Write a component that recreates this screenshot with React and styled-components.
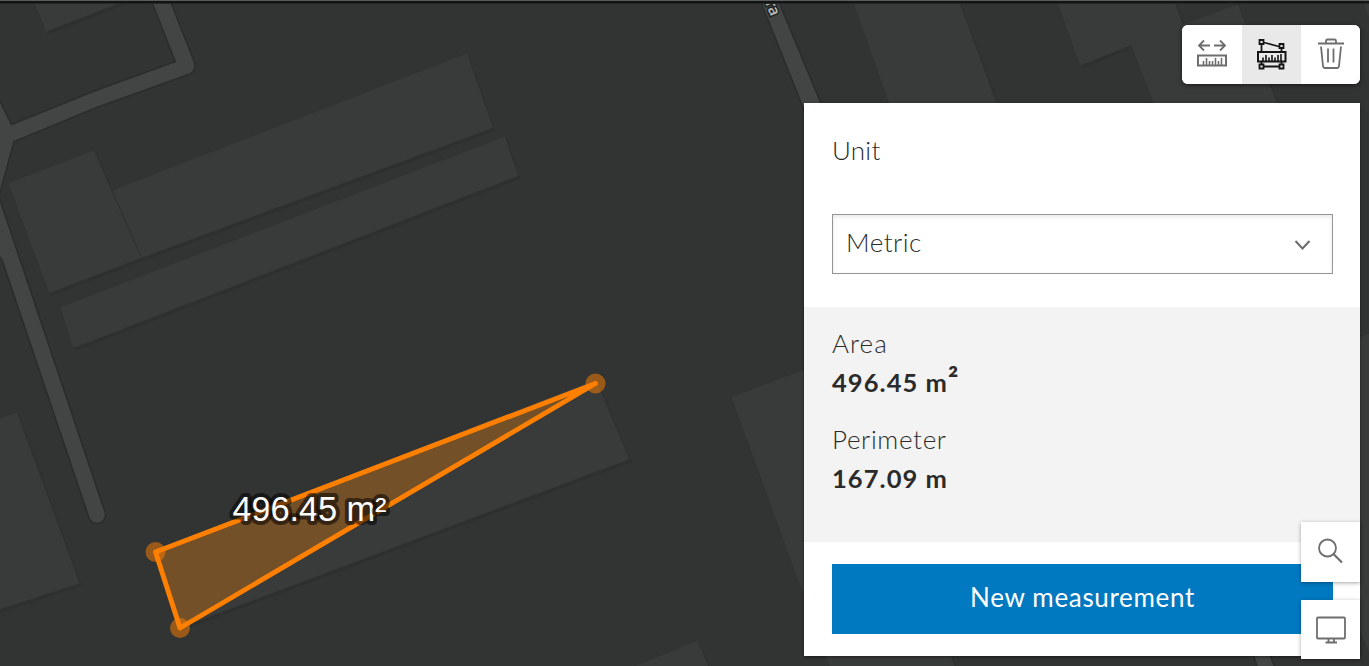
import React from "react";
import styled, { createGlobalStyle } from "styled-components";

const GlobalStyle = createGlobalStyle`
  *, *::before, *::after { box-sizing: border-box; }
  body { margin: 0; overflow: hidden; font-family: Lato, "Liberation Sans", sans-serif; color: #2b2b2b; }
  button { font: inherit; border: 0; padding: 0; cursor: pointer; }
`;

const Viewer = styled.main`
  position: relative;
  width: 1369px;
  height: 666px;
  overflow: hidden;
  background: #323433;
`;

const MapCanvas = styled.svg`
  position: absolute;
  inset: 0;
  display: block;
`;

const Tools = styled.div`
  position: absolute;
  top: 25px;
  right: 9px;
  width: 556px;
  display: flex;
  flex-direction: column;
  align-items: flex-end;
  gap: 19px;
`;

const Toolbar = styled.div`
  display: flex;
  width: 178px;
  height: 59px;
  border-radius: 6px;
  overflow: hidden;
  background: #fff;
  box-shadow: 0 1px 4px rgba(0, 0, 0, 0.6);
`;

const ToolButton = styled.button`
  flex: ${(p) => (p.$wide ? "0 0 60px" : "0 0 59px")};
  display: flex;
  align-items: center;
  justify-content: center;
  padding-bottom: 1px;
  background: ${(p) => (p.$active ? "#e9e9e9" : "#fff")};
  color: ${(p) => (p.$active ? "#151515" : "#6e6e6e")};
`;

const Panel = styled.section`
  width: 556px;
  height: 553px;
  background: #fff;
  box-shadow: 0 1px 3px rgba(0, 0, 0, 0.5);
`;

const UnitSection = styled.div`
  height: 204px;
  padding: 31px 27px 0 28px;
`;

const Label = styled.div`
  font-weight: 300;
  font-size: 26px;
  line-height: 32px;
  letter-spacing: ${(p) => p.$spacing || "0.5px"};
`;

const Select = styled.div`
  display: flex;
  align-items: center;
  justify-content: space-between;
  height: 60px;
  margin-top: 48px;
  padding: 0 21px 5px 13px;
  border: 1px solid #959595;
  box-shadow: inset 0 2px 4px rgba(0, 0, 0, 0.09);
  svg { margin-top: 7px; }
`;

const Results = styled.div`
  height: 235px;
  padding: 20px 28px 0;
  background: #f3f3f3;
`;

const Result = styled.div`
  height: 96px;
`;

const Value = styled.div`
  margin-top: 8px;
  font-weight: 700;
  font-size: 25.5px;
  line-height: 31px;
  letter-spacing: 1.05px;
`;

const Exponent = styled.span`
  font-size: 31px;
  line-height: 0;
`;

const Actions = styled.div`
  padding: 22px 27px 22px 28px;
`;

const PrimaryButton = styled.button`
  display: block;
  width: 100%;
  height: 70px;
  padding-bottom: 4px;
  background: #0079c1;
  color: #fff;
  font-size: 26px;
  letter-spacing: 0.67px;
`;

const CornerControls = styled.div`
  position: absolute;
  right: 9px;
  bottom: 7px;
  display: flex;
  flex-direction: column;
  gap: 18px;
`;

const CornerButton = styled.button`
  display: flex;
  align-items: center;
  justify-content: center;
  width: 59px;
  height: ${(p) => p.$height}px;
  background: #fff;
  color: #6e6e6e;
  box-shadow: 0 1px 4px rgba(0, 0, 0, 0.35);
`;

const buildings = [
  "33,0 46,32 128,0",
  "8,183 94,150 141.5,258 49,293.5",
  "112,190 467,53 493.5,128 142,258",
  "60,307 505,136 518.5,176 73,348.5",
  "-5,420 17,412 80,583.5 -5,611",
  "152,550 596,379 629.5,459.5 180,628",
  "731,397 860,348 955,668 830,668",
  "625,670 698,640 710,670",
  "852,0 959,0 1010,140 902,140",
  "1056,0 1080,66 1131,45.5 1160,120 1284,120 1238,4 1183,24 1174,0",
  "1362,0 1372,26 1372,0",
  "1340,345 1372,332 1372,660 1350,610",
];

function Basemap() {
  return (
    <MapCanvas width="1369" height="666" viewBox="0 0 1369 666">
      {buildings.map((points) => (
        <g key={points}>
          <polygon points={points} fill="#2e302f" transform="translate(2 2.5)" />
          <polygon points={points} fill="#393b3a" stroke="#303231" strokeWidth=".6" />
        </g>
      ))}
      <g fill="#434544" stroke="#2b2d2c" strokeWidth="1.6">
        <path d="M151 0 175.300 61.500 93 91.500 11.500 124.500 -3 95V195L-2 195 0 200 105 512A8.500 8.500 0 0 1 89 518L-3 245V194L0 193 14 141.500 98 107 190 74Q196 71 194.500 62.500L170 0Z" />
        <path d="M760 0 810 125H830L778 0Z" />
        <path d="M1252 650 1258 670H1276L1268 650Z" />
      </g>
      <path d="M-4 100V252L4 260 0 200 -2 195 0 190Z" fill="#434544" />
      <text
        x="771"
        y="17"
        textAnchor="end"
        transform="rotate(68 771 17)"
        fontFamily="Noto Sans, sans-serif"
        fontSize="15.500"
        fontWeight="600"
        fill="#b5b7b6"
        stroke="#222423"
        strokeWidth="3"
        paintOrder="stroke"
      >
        ra
      </text>
      <rect width="1369" height="1" fill="#5a5d5b" />
      <rect y="1" width="1369" height="2" fill="#131514" />
      <rect y="3" width="1369" height="1" fill="#252726" />
      <g fill="#ff8000" fillOpacity=".5">
        <circle cx="155.500" cy="552" r="10" />
        <circle cx="180" cy="628" r="10" />
        <circle cx="595.500" cy="383.500" r="10" />
      </g>
      <polygon points="155.500,552 595.500,383.500 180,628" fill="#ff8000" fillOpacity=".3" />
      <path d="M595.500 383.500 155.500 552 180 628Z" fill="none" stroke="#ff8000" strokeWidth="4.900" strokeLinejoin="round" />
      <text
        x="232.500"
        y="520.500"
        textLength="154"
        fontFamily="Liberation Sans, sans-serif"
        fontSize="34.500"
        fill="#fff"
        stroke="#000"
        strokeOpacity=".55"
        strokeWidth="8"
        strokeLinejoin="round"
        paintOrder="stroke"
      >
        496.45 m²
      </text>
    </MapCanvas>
  );
}

const DistanceIcon = () => (
  <svg width="32" height="32" viewBox="0 0 32 32" fill="none" stroke="currentColor" strokeWidth="1.800">
    <path d="M14 7.500H3M8 2.500 3 7.500 8 12.500M18 7.500H29M24 2.500 29 7.500 24 12.500" />
    <path d="M2 17.500H30V27.500H2Z" strokeWidth="2" />
    <path d="M7.500 27V23M10.500 27V20M13.500 27V23M16.500 27V23M19.500 27V20M22.500 27V23M25.500 27V20" strokeWidth="1.600" />
  </svg>
);

const AreaIcon = () => (
  <svg width="32" height="32" viewBox="0 0 32 32" fill="none" stroke="currentColor" strokeWidth="1.800">
    <path d="M5.500 6V14M25.500 9V14M8 4.500 23 8.500M5.500 24V27M25.500 24V27M8 28.500H23" />
    <path d="M3.500 2H7.500V6H3.500ZM23.500 6H27.500V10H23.500ZM3.500 26.500H7.500V30.500H3.500ZM23.500 26.500H27.500V30.500H23.500Z" />
    <path d="M2 14H29.500V23.500H2Z" strokeWidth="2" />
    <path d="M7 23V19.500M10 23V17M13 23V19.500M16 23V17M19 23V19.500M22 23V17M25 23V16" strokeWidth="1.600" />
  </svg>
);

const TrashIcon = () => (
  <svg width="32" height="32" viewBox="0 0 32 32" fill="none" stroke="currentColor" strokeWidth="1.800">
    <path d="M3 5.500H29M11 5V3Q11 1.500 12.500 1.500H19.500Q21 1.500 21 3V5M6 8.500 8 28Q8.200 30 10 30H22Q23.800 30 24 28L26 8.500M13 10.500V24.500M18.500 10.500V24.500" />
  </svg>
);

const ChevronIcon = () => (
  <svg width="17" height="12" viewBox="0 0 17 12" fill="none" stroke="#6a6a6a" strokeWidth="1.900">
    <path d="M1.500 2 8.500 9.500 15.500 2" />
  </svg>
);

const SearchIcon = () => (
  <svg width="32" height="32" viewBox="0 0 32 32" fill="none" stroke="currentColor" strokeWidth="1.800">
    <circle cx="12.500" cy="12" r="8.500" />
    <path d="M18.500 18 27 26.500" strokeWidth="2.200" />
  </svg>
);

const MonitorIcon = () => (
  <svg width="32" height="32" viewBox="0 0 32 32" fill="none" stroke="currentColor" strokeWidth="1.800">
    <rect x="2" y="3.500" width="28" height="21" rx="1" />
    <path d="M13.500 24.500V28M19 24.500V28M10.500 28.500H22" />
  </svg>
);

export default function App() {
  return (
    <Viewer>
      <GlobalStyle />
      <Basemap />
      <Tools>
        <Toolbar>
          <ToolButton $wide aria-label="Measure distance"><DistanceIcon /></ToolButton>
          <ToolButton $active aria-label="Measure area"><AreaIcon /></ToolButton>
          <ToolButton aria-label="Clear"><TrashIcon /></ToolButton>
        </Toolbar>
        <Panel>
          <UnitSection>
            <Label $spacing="0.25px">Unit</Label>
            <Select>
              <Label>Metric</Label>
              <ChevronIcon />
            </Select>
          </UnitSection>
          <Results>
            <Result>
              <Label $spacing="1.1px">Area</Label>
              <Value>496.45 m<Exponent>²</Exponent></Value>
            </Result>
            <Result>
              <Label $spacing="0.65px">Perimeter</Label>
              <Value>167.09 m</Value>
            </Result>
          </Results>
          <Actions>
            <PrimaryButton>New measurement</PrimaryButton>
          </Actions>
        </Panel>
      </Tools>
      <CornerControls>
        <CornerButton $height={60} aria-label="Search"><SearchIcon /></CornerButton>
        <CornerButton $height={59} aria-label="Basemap"><MonitorIcon /></CornerButton>
      </CornerControls>
    </Viewer>
  );
}
